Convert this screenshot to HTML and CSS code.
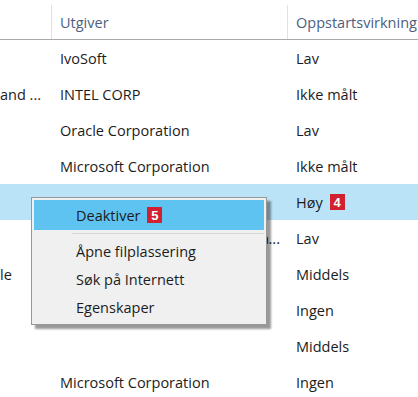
FILE: index.html
```html
<!DOCTYPE html>
<html lang="no">
<head>
<meta charset="utf-8">
<link rel="stylesheet" href="styles.css">
</head>
<body>
<div class="view">
  <div class="table">
    <div class="head">
      <div class="hc c1"></div>
      <div class="hc c2">Utgiver</div>
      <div class="hc c3">Oppstartsvirkning</div>
    </div>
    <div class="row"><div class="c c1"></div><div class="c c2">IvoSoft</div><div class="c c3">Lav</div></div>
    <div class="row"><div class="c c1">and ...</div><div class="c c2">INTEL CORP</div><div class="c c3">Ikke målt</div></div>
    <div class="row"><div class="c c1"></div><div class="c c2">Oracle Corporation</div><div class="c c3">Lav</div></div>
    <div class="row"><div class="c c1"></div><div class="c c2">Microsoft Corporation</div><div class="c c3">Ikke målt</div></div>
    <div class="row sel"><div class="c c1"></div><div class="c c2">Microsoft Corporation</div><div class="c c3">Høy <span class="badge">4</span></div></div>
    <div class="row"><div class="c c1"></div><div class="c c2"><span class="clip">Sun Microsystems, Inc. Java Platform Standard Edition</span><span class="dots">...</span></div><div class="c c3">Lav</div></div>
    <div class="row"><div class="c c1">le</div><div class="c c2"></div><div class="c c3">Middels</div></div>
    <div class="row"><div class="c c1"></div><div class="c c2"></div><div class="c c3">Ingen</div></div>
    <div class="row"><div class="c c1"></div><div class="c c2"></div><div class="c c3">Middels</div></div>
    <div class="row"><div class="c c1"></div><div class="c c2">Microsoft Corporation</div><div class="c c3">Ingen</div></div>
  </div>
  <div class="menu">
    <div class="mi active">Deaktiver <span class="badge">5</span></div>
    <div class="sep"></div>
    <div class="mi">Åpne filplassering</div>
    <div class="mi">Søk på Internett</div>
    <div class="mi">Egenskaper</div>
  </div>
</div>
</body>
</html>
```
FILE: styles.css
```css
html, body {
  margin: 0;
  padding: 0;
  background: #ffffff;
}
body {
  font-family: "Open Sans", "Noto Sans", sans-serif;
  font-size: 14.5px;
  color: #1c1c1c;
}
.view {
  position: relative;
  width: 418px;
  height: 397px;
  overflow: hidden;
}
.head, .row {
  display: grid;
  grid-template-columns: 51px 236px 1fr;
}
.head {
  height: 39px;
  border-bottom: 1px solid #a9a9a9;
}
.hc {
  display: flex;
  align-items: center;
  padding: 5px 0 0 8px;
  color: #4c607f;
  white-space: nowrap;
}
.hc.c2, .hc.c3 {
  border-left: 1px solid #e1e1e1;
  margin-top: 5px;
  padding-top: 0;
}
.row {
  height: 36px;
}
.row.sel {
  background: #bae3f7;
}
.c {
  display: flex;
  align-items: center;
  white-space: nowrap;
  overflow: hidden;
}
.c.c1 {
  padding-left: 0;
}
.c.c2, .c.c3 {
  padding-left: 9px;
}
.c.c2 {
  padding-right: 7px;
}
.clip {
  flex: 1;
  min-width: 0;
  overflow: hidden;
}
.dots {
  flex: none;
}
.badge {
  display: inline-flex;
  align-items: center;
  justify-content: center;
  width: 15px;
  height: 16px;
  margin-left: 7px;
  background: #d1202f;
  color: #ffffff;
  font-family: "Liberation Sans", Arial, sans-serif;
  font-weight: bold;
  font-size: 13px;
}
.menu {
  position: absolute;
  left: 31px;
  top: 197px;
  width: 230px;
  padding: 2px 2px 3px 2px;
  background: #f0f0f0;
  border: 1px solid #979797;
  box-shadow: 4px 4px 2px rgba(0, 0, 0, 0.4);
}
.mi {
  display: flex;
  align-items: center;
  height: 28px;
  padding-left: 42px;
  white-space: nowrap;
}
.mi.active {
  height: 30px;
  background: #5ec3f0;
}
.mi .badge {
  margin-left: 7px;
}
.sep {
  height: 1px;
  background: #d7d7d7;
  margin: 3px 0 3px 38px;
}
```
